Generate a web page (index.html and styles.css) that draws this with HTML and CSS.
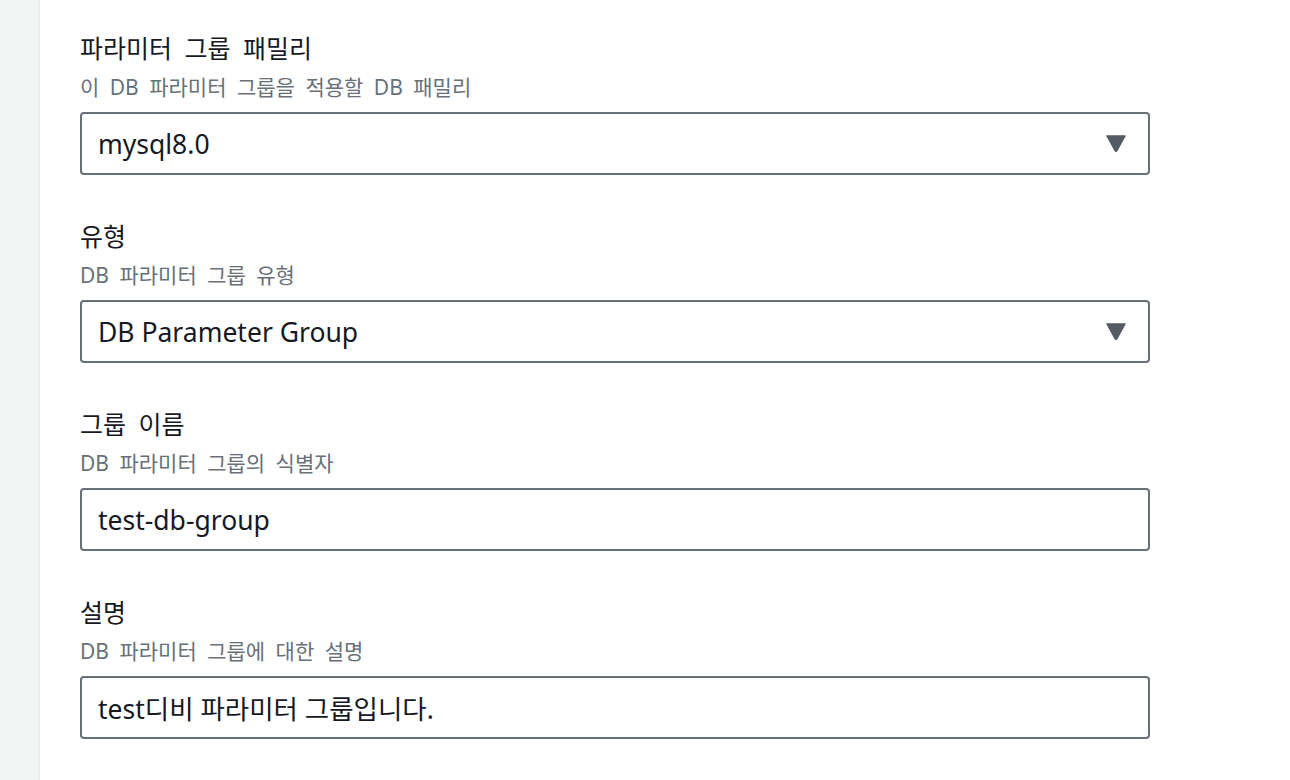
FILE: index.html
```html
<!DOCTYPE html>
<html lang="ko">
<head>
<meta charset="utf-8">
<link rel="stylesheet" href="styles.css">
</head>
<body>
<div class="page">
  <aside class="side"></aside>
  <main class="content">
    <div class="field">
      <div class="label">파라미터 그룹 패밀리</div>
      <div class="desc">이 DB 파라미터 그룹을 적용할 DB 패밀리</div>
      <div class="control select">
        <span class="value">mysql8.0</span>
        <svg class="caret" width="20" height="17" viewBox="0 0 20 17"><path d="M1 1 H19 L11 15.5 Q10 17 9 15.5 Z" fill="#545b64" stroke="#545b64" stroke-width="1.5" stroke-linejoin="round"/></svg>
      </div>
    </div>
    <div class="field">
      <div class="label">유형</div>
      <div class="desc">DB 파라미터 그룹 유형</div>
      <div class="control select">
        <span class="value">DB Parameter Group</span>
        <svg class="caret" width="20" height="17" viewBox="0 0 20 17"><path d="M1 1 H19 L11 15.5 Q10 17 9 15.5 Z" fill="#545b64" stroke="#545b64" stroke-width="1.5" stroke-linejoin="round"/></svg>
      </div>
    </div>
    <div class="field">
      <div class="label">그룹 이름</div>
      <div class="desc">DB 파라미터 그룹의 식별자</div>
      <div class="control">
        <span class="value">test-db-group</span>
      </div>
    </div>
    <div class="field">
      <div class="label">설명</div>
      <div class="desc">DB 파라미터 그룹에 대한 설명</div>
      <div class="control">
        <span class="value">test디비 파라미터 그룹입니다.</span>
      </div>
    </div>
  </main>
</div>
</body>
</html>
```

FILE: styles.css
```css
html, body {
  margin: 0;
  padding: 0;
  background: #ffffff;
}
body {
  font-family: "Noto Sans", "Noto Sans CJK KR", sans-serif;
  color: #16191f;
}
.page {
  display: flex;
  min-height: 780px;
}
.side {
  width: 38px;
  flex: 0 0 38px;
  background: #f2f3f3;
  border-right: 2px solid #e9ebeb;
}
.content {
  flex: 1;
  padding: 31px 0 0 40px;
}
.field {
  width: 1070px;
  margin-bottom: 44px;
}
.label {
  font-size: 25px;
  line-height: 34px;
  word-spacing: 6px;
  color: #16191f;
}
.desc {
  margin-top: 8px;
  font-size: 21px;
  line-height: 28px;
  word-spacing: 5px;
  color: #687078;
}
.control {
  margin-top: 11px;
  height: 63px;
  box-sizing: border-box;
  border: 2px solid #687078;
  border-radius: 4px;
  display: flex;
  align-items: center;
  justify-content: space-between;
  padding: 0 22px 0 16px;
}
.value {
  font-size: 26.5px;
  color: #16191f;
}
.caret {
  display: block;
}
```
